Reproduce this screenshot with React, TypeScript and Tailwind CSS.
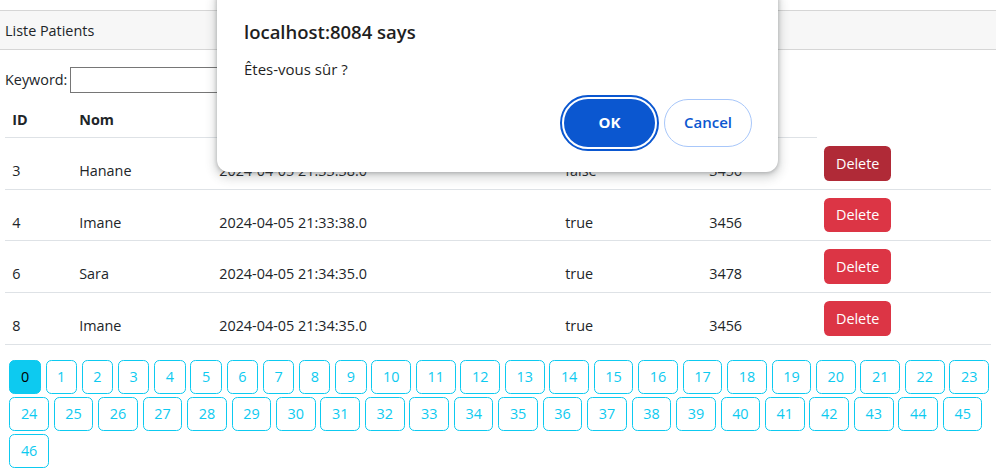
import React from 'react';

const patients = [
  { id: 3, nom: 'Hanane', date: '2024-04-05 21:33:38.0', malade: 'false', score: 3456, active: true },
  { id: 4, nom: 'Imane', date: '2024-04-05 21:33:38.0', malade: 'true', score: 3456, active: false },
  { id: 6, nom: 'Sara', date: '2024-04-05 21:34:35.0', malade: 'true', score: 3478, active: false },
  { id: 8, nom: 'Imane', date: '2024-04-05 21:34:35.0', malade: 'true', score: 3456, active: false },
];

const pages = Array.from({ length: 47 }, (_, i) => i);

const cols = 'grid grid-cols-[67px_140px_346px_144px_115px_174px]';

const App: React.FC = () => {
  return (
    <div className="relative w-[996px] h-[473px] overflow-hidden bg-white font-['Open_Sans',sans-serif] text-[14.4px] leading-[21.6px] text-[#212529]">
      <div className="pt-[10px]">
        <div className="h-[40px] flex items-center px-[5px] pt-px bg-[#f7f7f7] border-y border-[#d6d6d6]">
          Liste Patients
        </div>
        <div className="px-[5px]">
          <form className="mt-[17px] flex items-center h-[26px]">
            <label>Keyword:</label>
            <input className="ml-[3px] w-[220px] h-[26px] border border-[#767676] bg-white" />
          </form>

          <div className="mt-[9px]">
            {/* columns 3-5 headers sit under the dialog */}
            <div className={cols + ' h-[36px] font-bold'}>
              <div className="px-[7.2px] pt-[7.2px] border-b border-[#dee2e6]">ID</div>
              <div className="px-[7.2px] pt-[7.2px] border-b border-[#dee2e6]">Nom</div>
              <div className="border-b border-[#dee2e6]"></div>
              <div className="border-b border-[#dee2e6]"></div>
              <div className="border-b border-[#dee2e6]"></div>
              <div></div>
            </div>
            {patients.map((p) => (
              <div key={p.id} className={cols + ' h-[51.7px] border-b border-[#dee2e6]'}>
                <div className="px-[7.2px] pb-[7.2px] self-end">{p.id}</div>
                <div className="px-[7.2px] pb-[7.2px] self-end">{p.nom}</div>
                <div className="px-[7.2px] pb-[7.2px] self-end">{p.date}</div>
                <div className="px-[7.2px] pb-[7.2px] self-end">{p.malade}</div>
                <div className="px-[7.2px] pb-[7.2px] self-end">{p.score}</div>
                <div className="px-[7.2px] pt-[8px] self-start">
                  <button
                    className={
                      'w-[67px] h-[34.6px] rounded-[5.4px] text-white ' +
                      (p.active ? 'bg-[#b02a37]' : 'bg-[#dc3545]')
                    }
                  >
                    Delete
                  </button>
                </div>
              </div>
            ))}
          </div>

          <div className="mt-[15px] -mr-[5px] pl-[4.3px] flex flex-wrap gap-x-[4.8px] gap-y-[2.4px]">
            {pages.map((n) => (
              <button
                key={n}
                className={
                  'h-[34.6px] px-[10.6px] rounded-[5.4px] border border-[#0dcaf0] ' +
                  (n === 0 ? 'bg-[#0dcaf0] text-black' : 'bg-white text-[#0dcaf0]')
                }
              >
                {n}
              </button>
            ))}
          </div>
        </div>
      </div>

      {/* browser confirm() dialog */}
      <div className="absolute left-[217px] top-[-12px] w-[561px] h-[184px] rounded-[12px] bg-white shadow-[0_1px_4px_rgba(60,64,67,0.35),0_4px_10px_3px_rgba(60,64,67,0.18)] pl-[27px] pr-[26px] pt-[32px] text-[#1f1f1f]">
        <div className="text-[18.5px] leading-[24px] font-semibold">localhost:8084 says</div>
        <div className="mt-[15px] text-[15px] leading-[20px]">Êtes-vous sûr ?</div>
        <div className="mt-[20px] flex justify-end gap-[9px]">
          <button className="w-[91px] h-[48px] rounded-full bg-[#0b57d0] text-white text-[15px] font-bold outline-2 outline-offset-2 outline-[#0b57d0]">
            OK
          </button>
          <button className="w-[88px] h-[48px] rounded-full border border-[#a8c7fa] bg-white text-[#0b57d0] text-[15px] font-semibold">
            Cancel
          </button>
        </div>
      </div>
    </div>
  );
};

export default App;
